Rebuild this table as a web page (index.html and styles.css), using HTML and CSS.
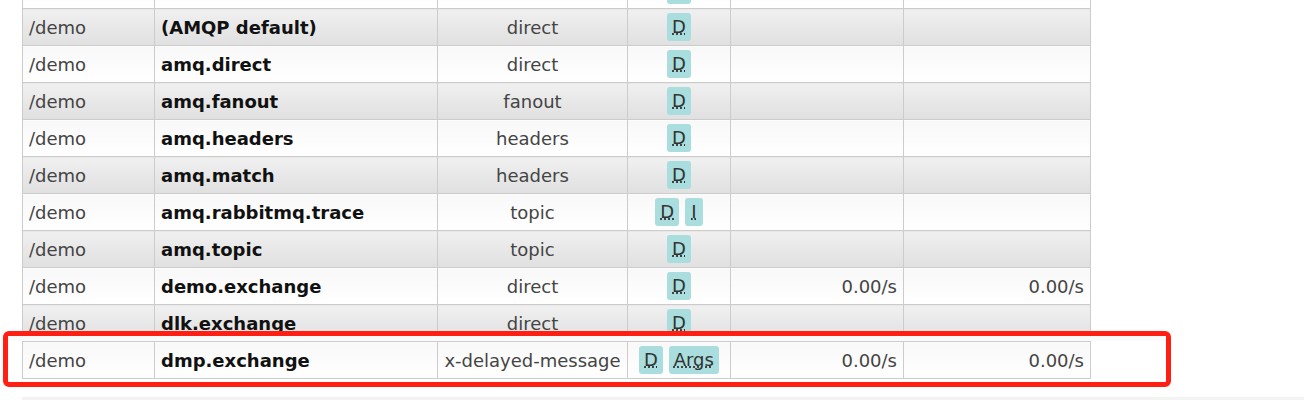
FILE: index.html
```html
<!DOCTYPE html>
<html lang="en">
<head>
    <meta charset="UTF-8">
    <meta name="viewport" content="width=device-width, initial-scale=1.0">
    <title>Exchanges</title>
    <link rel="stylesheet" href="styles.css">
</head>
<body>
    <div class="main">
        <table class="list">
            <colgroup>
                <col class="c-vhost">
                <col class="c-name">
                <col class="c-type">
                <col class="c-features">
                <col class="c-rate-in">
                <col class="c-rate-out">
            </colgroup>
            <tbody>
                <tr class="alt2 above">
                    <td></td>
                    <td class="name">test.demo.binding</td>
                    <td class="c"></td>
                    <td class="c"><abbr class="badge" title="durable">D</abbr></td>
                    <td class="r"></td>
                    <td class="r"></td>
                </tr>
                <tr class="alt1">
                    <td>/demo</td>
                    <td class="name">(AMQP default)</td>
                    <td class="c">direct</td>
                    <td class="c"><abbr class="badge" title="durable">D</abbr></td>
                    <td class="r"></td>
                    <td class="r"></td>
                </tr>
                <tr class="alt2">
                    <td>/demo</td>
                    <td class="name">amq.direct</td>
                    <td class="c">direct</td>
                    <td class="c"><abbr class="badge" title="durable">D</abbr></td>
                    <td class="r"></td>
                    <td class="r"></td>
                </tr>
                <tr class="alt1">
                    <td>/demo</td>
                    <td class="name">amq.fanout</td>
                    <td class="c">fanout</td>
                    <td class="c"><abbr class="badge" title="durable">D</abbr></td>
                    <td class="r"></td>
                    <td class="r"></td>
                </tr>
                <tr class="alt2">
                    <td>/demo</td>
                    <td class="name">amq.headers</td>
                    <td class="c">headers</td>
                    <td class="c"><abbr class="badge" title="durable">D</abbr></td>
                    <td class="r"></td>
                    <td class="r"></td>
                </tr>
                <tr class="alt1">
                    <td>/demo</td>
                    <td class="name">amq.match</td>
                    <td class="c">headers</td>
                    <td class="c"><abbr class="badge" title="durable">D</abbr></td>
                    <td class="r"></td>
                    <td class="r"></td>
                </tr>
                <tr class="alt2">
                    <td>/demo</td>
                    <td class="name">amq.rabbitmq.trace</td>
                    <td class="c">topic</td>
                    <td class="c"><abbr class="badge" title="durable">D</abbr> <abbr class="badge" title="internal">I</abbr></td>
                    <td class="r"></td>
                    <td class="r"></td>
                </tr>
                <tr class="alt1">
                    <td>/demo</td>
                    <td class="name">amq.topic</td>
                    <td class="c">topic</td>
                    <td class="c"><abbr class="badge" title="durable">D</abbr></td>
                    <td class="r"></td>
                    <td class="r"></td>
                </tr>
                <tr class="alt2">
                    <td>/demo</td>
                    <td class="name">demo.exchange</td>
                    <td class="c">direct</td>
                    <td class="c"><abbr class="badge" title="durable">D</abbr></td>
                    <td class="r">0.00/s</td>
                    <td class="r">0.00/s</td>
                </tr>
                <tr class="alt1">
                    <td>/demo</td>
                    <td class="name">dlk.exchange</td>
                    <td class="c">direct</td>
                    <td class="c"><abbr class="badge" title="durable">D</abbr></td>
                    <td class="r"></td>
                    <td class="r"></td>
                </tr>
                <tr class="alt2">
                    <td>/demo</td>
                    <td class="name">dmp.exchange</td>
                    <td class="c">x-delayed-message</td>
                    <td class="c"><abbr class="badge" title="durable">D</abbr> <abbr class="badge" title="x-delayed-type: direct">Args</abbr></td>
                    <td class="r">0.00/s</td>
                    <td class="r">0.00/s</td>
                </tr>
            </tbody>
        </table>
        <div class="next-section"></div>
    </div>

    <!-- annotation around the new exchange -->
    <div class="highlight"></div>
</body>
</html>
```

FILE: styles.css
```css
body {
    font-family: 'DejaVu Sans', Verdana, sans-serif;
    font-size: 18px;
    margin: 0;
    background-color: white;
    color: #444;
    overflow: hidden;
}
.main {
    padding-left: 22px;
}
table.list {
    border-collapse: collapse;
    table-layout: fixed;
    width: 1069px;
    margin-top: -29px;
}
.c-vhost { width: 132px; }
.c-name { width: 283px; }
.c-type { width: 190px; }
.c-features { width: 103px; }
.c-rate-in { width: 173px; }
.c-rate-out { width: 187px; }
table.list tr {
    height: 37px;
}
table.list td {
    border: 1px solid #ccc;
    padding: 0 6px;
    vertical-align: middle;
    white-space: nowrap;
    overflow: hidden;
}
/* row scrolled mostly out of view */
tr.above td.name {
    padding-bottom: 4px;
}
tr.alt1 td {
    background: linear-gradient(#f0f0f0, #e0e0e0);
}
tr.alt2 td {
    background: linear-gradient(#f8f8f8, #ffffff);
}
td.name {
    font-weight: bold;
    color: #111;
}
td.c {
    text-align: center;
}
td.r {
    text-align: right;
}
.badge {
    display: inline-block;
    box-sizing: border-box;
    min-width: 18px;
    background-color: #aadddd;
    color: #333;
    border-radius: 3px;
    padding: 0 5px;
    height: 28px;
    line-height: 28px;
    text-align: center;
    text-decoration: underline dotted;
    vertical-align: middle;
}
.next-section {
    margin-top: 18px;
    height: 20px;
    background-color: #f3f3f3;
}
.highlight {
    position: absolute;
    left: 3px;
    top: 331px;
    width: 1158px;
    height: 46px;
    border: 5px solid #ff2013;
    border-radius: 6px;
}
.highlight::before {
    content: '';
    position: absolute;
    left: 0;
    right: 0;
    top: 0;
    height: 5px;
    background-color: #fafafa;
}
```
